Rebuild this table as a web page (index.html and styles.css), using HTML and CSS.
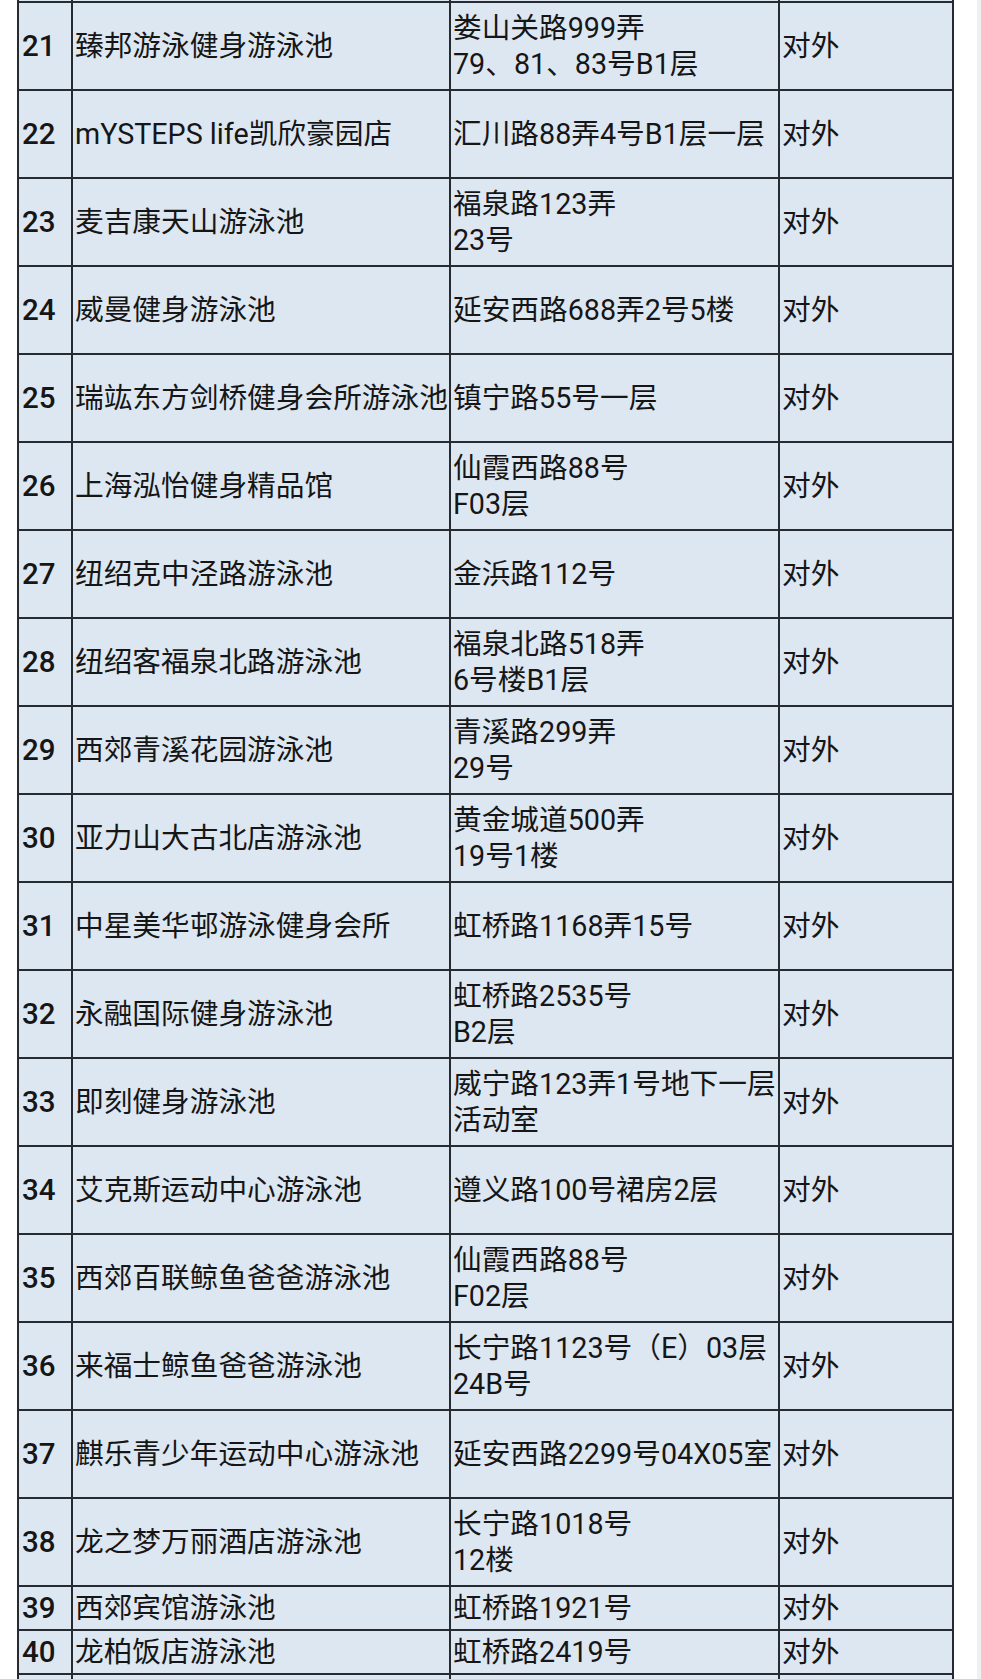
FILE: index.html
```html
<!DOCTYPE html>
<html lang="zh-CN">
<head>
<meta charset="utf-8">
<title>游泳池列表</title>
<link rel="stylesheet" href="styles.css">
</head>
<body>
<div class="page">
  <div class="sheet">
    <table class="pools">
      <colgroup>
        <col class="c-no"><col class="c-name"><col class="c-addr"><col class="c-type">
      </colgroup>
      <tbody>
        <tr class="stub"><td></td><td></td><td></td><td></td></tr>
        <tr class="tall"><td class="no">21</td><td>臻邦游泳健身游泳池</td><td>娄山关路999弄<br>79、81、83号B1层</td><td>对外</td></tr>
        <tr class="tall"><td class="no">22</td><td>mYSTEPS life凯欣豪园店</td><td>汇川路88弄4号B1层一层</td><td>对外</td></tr>
        <tr class="tall"><td class="no">23</td><td>麦吉康天山游泳池</td><td>福泉路123弄<br>23号</td><td>对外</td></tr>
        <tr class="tall"><td class="no">24</td><td>威曼健身游泳池</td><td>延安西路688弄2号5楼</td><td>对外</td></tr>
        <tr class="tall"><td class="no">25</td><td>瑞竑东方剑桥健身会所游泳池</td><td>镇宁路55号一层</td><td>对外</td></tr>
        <tr class="tall"><td class="no">26</td><td>上海泓怡健身精品馆</td><td>仙霞西路88号<br>F03层</td><td>对外</td></tr>
        <tr class="tall"><td class="no">27</td><td>纽绍克中泾路游泳池</td><td>金浜路112号</td><td>对外</td></tr>
        <tr class="tall"><td class="no">28</td><td>纽绍客福泉北路游泳池</td><td>福泉北路518弄<br>6号楼B1层</td><td>对外</td></tr>
        <tr class="tall"><td class="no">29</td><td>西郊青溪花园游泳池</td><td>青溪路299弄<br>29号</td><td>对外</td></tr>
        <tr class="tall"><td class="no">30</td><td>亚力山大古北店游泳池</td><td>黄金城道500弄<br>19号1楼</td><td>对外</td></tr>
        <tr class="tall"><td class="no">31</td><td>中星美华邨游泳健身会所</td><td>虹桥路1168弄15号</td><td>对外</td></tr>
        <tr class="tall"><td class="no">32</td><td>永融国际健身游泳池</td><td>虹桥路2535号<br>B2层</td><td>对外</td></tr>
        <tr class="tall"><td class="no">33</td><td>即刻健身游泳池</td><td>威宁路123弄1号地下一层<br>活动室</td><td>对外</td></tr>
        <tr class="tall"><td class="no">34</td><td>艾克斯运动中心游泳池</td><td>遵义路100号裙房2层</td><td>对外</td></tr>
        <tr class="tall"><td class="no">35</td><td>西郊百联鲸鱼爸爸游泳池</td><td>仙霞西路88号<br>F02层</td><td>对外</td></tr>
        <tr class="tall"><td class="no">36</td><td>来福士鲸鱼爸爸游泳池</td><td>长宁路1123号（E）03层<br>24B号</td><td>对外</td></tr>
        <tr class="tall"><td class="no">37</td><td>麒乐青少年运动中心游泳池</td><td>延安西路2299号04X05室</td><td>对外</td></tr>
        <tr class="tall"><td class="no">38</td><td>龙之梦万丽酒店游泳池</td><td>长宁路1018号<br>12楼</td><td>对外</td></tr>
        <tr class="short"><td class="no">39</td><td>西郊宾馆游泳池</td><td>虹桥路1921号</td><td>对外</td></tr>
        <tr class="short"><td class="no">40</td><td>龙柏饭店游泳池</td><td>虹桥路2419号</td><td>对外</td></tr>
        <tr class="stub"><td></td><td></td><td></td><td></td></tr>
      </tbody>
    </table>
  </div>
  <div class="scroll-edge"></div>
</div>
</body>
</html>
```

FILE: styles.css
```css
html, body {
  margin: 0;
  padding: 0;
  background: #ffffff;
}

.page {
  display: flex;
  width: 981px;
  height: 1679px;
  overflow: hidden;
}

.sheet {
  flex: 1;
  padding-left: 17px;
}

.scroll-edge {
  width: 4px;
  background: #eef0f2;
}

.pools {
  border-collapse: collapse;
  table-layout: fixed;
  width: 935px;
  background: #dde7f2;
  color: #161616;
  font-family: Roboto, "Noto Sans CJK SC", sans-serif;
  font-size: 28.7px;
  line-height: 36px;
}

.c-no { width: 54px; }
.c-name { width: 378px; }
.c-addr { width: 329px; }
.c-type { width: 174px; }

.pools td {
  border: 2px solid #262b31;
  padding: 0 0 0 2px;
  vertical-align: middle;
  white-space: nowrap;
  overflow: hidden;
}

.pools td.no {
  font-weight: 500;
  font-size: 29.5px;
  padding-left: 3px;
}

.pools tr.stub td {
  height: 1px;
  border-top: none;
  border-bottom-width: 2px;
}

.pools tr.stub:last-child td {
  height: 4px;
  border-bottom: none;
}

.pools tr.tall td {
  height: 86px;
}

.pools tr.short td {
  height: 42px;
}
```
